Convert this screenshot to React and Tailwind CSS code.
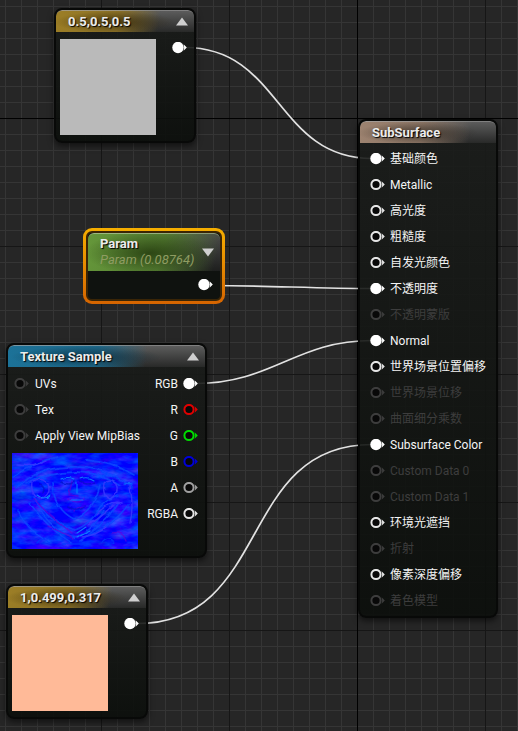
import React from 'react';

const PIN_COLORS = {
  white: '#e6e6e6',
  off: '#3d3d3d',
  red: '#e00000',
  green: '#00dc00',
  blue: '#0000d8',
  gray: '#a0a0a0',
};

function Pin({ color = 'white', filled = false }) {
  const c = filled ? '#ffffff' : PIN_COLORS[color];
  return (
    <svg width="15" height="12" viewBox="0 0 15 12" className="shrink-0" aria-hidden="true">
      {filled ? (
        <circle cx="6" cy="5.5" r="5.7" fill={c} />
      ) : (
        <circle cx="6" cy="5.5" r="4.6" fill="#080808" stroke={c} strokeWidth="2" />
      )}
      <path d="M11.6 2.2 Q12.6 5.5 11.6 8.8 L14.8 5.5 Z" fill={c} />
    </svg>
  );
}

function Toggle({ down = false, label }) {
  return (
    <button type="button" aria-label={label} className="flex h-5 w-4 items-center justify-center">
      <svg width="12" height="9" viewBox="0 0 12 9" aria-hidden="true">
        <path d={down ? 'M0 0.5 H12 L6 8.5 Z' : 'M0 8.5 H12 L6 0.5 Z'} fill="#cfcfcf" />
      </svg>
    </button>
  );
}

const HEADERS = {
  gold: 'bg-[radial-gradient(ellipse_60px_11px_at_58px_11px,rgba(45,34,4,0.7),transparent),linear-gradient(100deg,#9c7e26_0%,#8a7027_45%,transparent_74%),linear-gradient(#5c5c5c,#282928)]',
  tan: 'bg-[radial-gradient(ellipse_60px_11px_at_58px_11px,rgba(45,38,30,0.7),transparent),linear-gradient(100deg,#9d8370_0%,#8a7464_45%,transparent_80%),linear-gradient(#5c5c5c,#282928)]',
  blue: 'bg-[radial-gradient(ellipse_75px_11px_at_78px_11px,rgba(6,38,54,0.7),transparent),linear-gradient(97deg,#1c7298_0%,#1e6788_45%,transparent_70%),linear-gradient(#5c5c5c,#282928)]',
  green: 'bg-[radial-gradient(ellipse_65px_22px_at_62px_19px,rgba(30,50,10,0.75),transparent),linear-gradient(105deg,#65973a_0%,#567f33_55%,transparent_95%),linear-gradient(#4a4a4a,#1e1f1e)]',
};

function Node({ place, tone, title, toggle, children }) {
  return (
    <section
      className={`absolute overflow-hidden rounded-lg border-2 border-[#080908] bg-linear-to-b from-[#1a1c1a]/90 to-[#0b0e0b]/90 shadow-[0_3px_6px_rgba(0,0,0,0.55)] ${place}`}
    >
      <header
        className={`flex h-[22px] items-center justify-between rounded-t-md border-t border-[#a5a5a5]/70 pr-1 pl-3 ${HEADERS[tone]}`}
      >
        <h2 className="text-[13px] leading-5 font-bold text-[#ececec] [text-shadow:1px_1px_1px_#000]">{title}</h2>
        {toggle && <Toggle label={`Collapse ${title}`} />}
      </header>
      {children}
    </section>
  );
}

function ConstantNode({ place, title, swatch }) {
  return (
    <Node place={place} tone="gold" title={title} toggle>
      <div className="flex items-start justify-between pt-[7px] pr-[7px] pb-[6px] pl-1">
        <div className={`size-24 ${swatch}`} />
        <div className="pt-[3px]">
          <Pin filled />
        </div>
      </div>
    </Node>
  );
}

const INPUTS = [
  ['基础颜色', 'linked'],
  ['Metallic', 'on'],
  ['高光度', 'on'],
  ['粗糙度', 'on'],
  ['自发光颜色', 'on'],
  ['不透明度', 'linked'],
  ['不透明蒙版', 'off'],
  ['Normal', 'linked'],
  ['世界场景位置偏移', 'on'],
  ['世界场景位移', 'off'],
  ['曲面细分乘数', 'off'],
  ['Subsurface Color', 'linked'],
  ['Custom Data 0', 'off'],
  ['Custom Data 1', 'off'],
  ['环境光遮挡', 'on'],
  ['折射', 'off'],
  ['像素深度偏移', 'on'],
  ['着色模型', 'off'],
];

const OUTPUTS = [
  ['RGB', 'white'],
  ['R', 'red'],
  ['G', 'green'],
  ['B', 'blue'],
  ['A', 'gray'],
  ['RGBA', 'white'],
];

function NormalMap() {
  return (
    <svg width="126" height="96" viewBox="0 0 126 96" className="block" role="img" aria-label="Normal map preview">
      <defs>
        <filter id="ripple" x="0" y="0" width="100%" height="100%" colorInterpolationFilters="sRGB">
          <feTurbulence type="fractalNoise" baseFrequency="0.05 0.12" numOctaves="4" seed="8" />
          <feColorMatrix values="0.6 0 0 0 -0.25  0 0.8 0 0 -0.3  0 0 0.2 0 0.9  0 0 0 0 1" />
        </filter>
        <filter id="warp" x="-5%" y="-5%" width="110%" height="110%">
          <feTurbulence type="fractalNoise" baseFrequency="0.09" numOctaves="2" seed="3" />
          <feDisplacementMap in="SourceGraphic" scale="4" xChannelSelector="R" yChannelSelector="G" />
        </filter>
      </defs>
      <rect width="126" height="96" fill="#0000ff" />
      <rect width="126" height="96" filter="url(#ripple)" />
      <g fill="none" filter="url(#warp)" strokeLinecap="round">
        <g stroke="#0a48ff" strokeWidth="1.8" opacity="0.8">
          <path d="M2 24 Q24 8 46 4" />
          <path d="M4 36 Q22 16 56 14 Q90 12 120 34" />
          <path d="M14 30 Q36 20 63 19 Q92 20 108 32" />
          <path d="M22 44 Q30 62 46 68 Q56 76 63 77 Q78 72 88 54 Q96 46 106 42" />
          <path d="M28 58 Q46 82 64 84 Q78 80 92 58" />
          <path d="M18 50 Q34 74 60 90" />
          <path d="M106 50 Q92 72 68 88" />
          <path d="M116 52 Q98 76 72 84" />
          <path d="M6 58 Q14 76 34 86" />
          <path d="M40 30 Q42 56 62 66 Q82 58 88 32" />
          <path d="M74 6 Q100 8 122 22" />
        </g>
        <g stroke="#3a38ff" strokeWidth="1.4" opacity="0.85">
          <path d="M6 12 Q20 14 34 8" />
          <path d="M20 28 Q18 42 28 46 Q40 42 36 30 Q30 24 22 28" />
          <path d="M92 30 Q90 44 98 46 Q108 40 104 30 Q98 24 92 30" />
          <path d="M84 62 Q98 46 110 50" />
          <path d="M76 72 Q90 64 102 52" />
          <path d="M118 34 Q122 54 118 70" />
          <path d="M70 84 Q86 82 94 74" />
        </g>
        <g stroke="#6000dc" strokeWidth="1.4" opacity="0.65">
          <path d="M22 46 Q36 62 60 80" />
          <path d="M36 73 Q48 78 62 85" />
          <path d="M56 46 Q64 52 72 46" />
          <path d="M60 28 L57 42 L66 43" />
          <path d="M62 58 Q68 52 72 54" />
          <path d="M100 80 Q110 78 114 88" />
        </g>
        <g stroke="#0c88ff" strokeWidth="1.1" opacity="0.9">
          <path d="M49 26 Q56 23 62 26" />
          <path d="M69 26 Q76 23 82 27" />
          <path d="M58 47 H71" />
          <path d="M65 30 V40" />
          <path d="M112 31 H119" />
          <path d="M25 42 Q32 48 38 42" />
          <path d="M65 80 L74 74" />
          <path d="M66 84 L78 78" />
        </g>
        <g stroke="#0010c8" strokeWidth="1.6" opacity="0.7">
          <path d="M50 29 Q57 33 62 29" />
          <path d="M69 29 Q76 33 82 29" />
          <path d="M56 54 Q64 59 73 53" />
          <path d="M28 32 Q34 34 31 40" />
        </g>
        <g stroke="#0838ff" strokeWidth="1.4" opacity="0.8">
          <path d="M50 91 H78" />
          <path d="M25 90 Q31 82 38 90" />
          <path d="M90 90 Q97 82 103 90" />
        </g>
      </g>
    </svg>
  );
}

function Backdrop() {
  return (
    <svg className="absolute inset-0 h-full w-full" aria-hidden="true">
      <defs>
        <pattern id="minor" x="5" y="6" width="16" height="16" patternUnits="userSpaceOnUse">
          <path d="M0 0.5 H16 M0.5 0 V16" stroke="#353535" />
        </pattern>
        <pattern id="major" x="101" y="118" width="128" height="128" patternUnits="userSpaceOnUse">
          <path d="M0 0.5 H128 M0.5 0 V128" stroke="#161616" />
        </pattern>
      </defs>
      <rect width="100%" height="100%" fill="url(#minor)" />
      <rect width="100%" height="100%" fill="url(#major)" />
      <rect y="118" width="100%" height="1" fill="#000000" />
      <rect x="357" width="1" height="100%" fill="#000000" />
      <g fill="none" stroke="#e2e2e2" strokeWidth="1.7">
        <path d="M185 47.5 C281 47.5 276 158.5 372 158.5" />
        <path d="M211 285.5 C265 285.5 318 288.5 372 288.5" />
        <path d="M196 383.5 C272 383.5 296 340.5 372 340.5" />
        <path d="M137 623.5 C272 623.5 237 444.5 372 444.5" />
      </g>
    </svg>
  );
}

export default function App() {
  return (
    <main className="relative min-h-screen w-full overflow-hidden bg-[#262626] font-[Roboto,'Noto_Sans_CJK_SC',sans-serif] text-xs text-[#f4f4f4]">
      <Backdrop />

      <ConstantNode place="left-[54px] top-2 w-[142px]" title="0.5,0.5,0.5" swatch="bg-[#bababa]" />

      <section className="absolute top-[228px] left-[83px] w-[142px] rounded-[9px] bg-linear-to-b from-[#f5ae00] to-[#d56400] p-[3px]">
        <div className="overflow-hidden rounded-md border-2 border-[#3a2506] bg-[#0f120f]">
          <header
            className={`flex h-[38px] items-center justify-between rounded-t-md border-t border-[#b6cc9c]/70 pr-1 pl-3 ${HEADERS.green}`}
          >
            <div className="pb-[2px]">
              <h2 className="text-[13px] leading-4 font-bold text-[#ececec] [text-shadow:1px_1px_1px_#000]">Param</h2>
              <p className="text-[13px] leading-4 text-[#8f9c62] italic">Param (0.08764)</p>
            </div>
            <Toggle down label="Expand Param" />
          </header>
          <div className="flex h-7 items-center justify-end pr-[7px]">
            <Pin filled />
          </div>
        </div>
      </section>

      <Node place="left-[6px] top-[343px] w-[201px]" tone="blue" title="Texture Sample" toggle>
        <div className="flex justify-between pt-1 pr-[7px] pb-[7px] pl-1">
          <div className="w-[136px]">
            <ul className="pl-[2px]">
              {['UVs', 'Tex', 'Apply View MipBias'].map((name) => (
                <li key={name} className="flex h-[26px] items-center gap-[6px] whitespace-nowrap">
                  <Pin color="off" />
                  {name}
                </li>
              ))}
            </ul>
            <div className="pt-1">
              <NormalMap />
            </div>
          </div>
          <ul>
            {OUTPUTS.map(([name, color]) => (
              <li key={name} className="flex h-[26px] items-center justify-end gap-[5px]">
                {name}
                <Pin color={color} filled={name === 'RGB'} />
              </li>
            ))}
          </ul>
        </div>
      </Node>

      <ConstantNode place="left-[6px] top-[584px] w-[142px]" title="1,0.499,0.317" swatch="bg-[#ffba98]" />

      <Node place="left-[358px] top-[119px] w-[140px]" tone="tan" title="SubSurface">
        <ul className="pt-[3px] pb-[2px] pl-[10px]">
          {INPUTS.map(([name, state]) => (
            <li
              key={name}
              className={`flex h-[26px] items-center gap-[5px] whitespace-nowrap ${state === 'off' ? 'text-[#3d3d3d]' : ''}`}
            >
              <Pin color={state === 'off' ? 'off' : 'white'} filled={state === 'linked'} />
              {name}
            </li>
          ))}
        </ul>
      </Node>
    </main>
  );
}
